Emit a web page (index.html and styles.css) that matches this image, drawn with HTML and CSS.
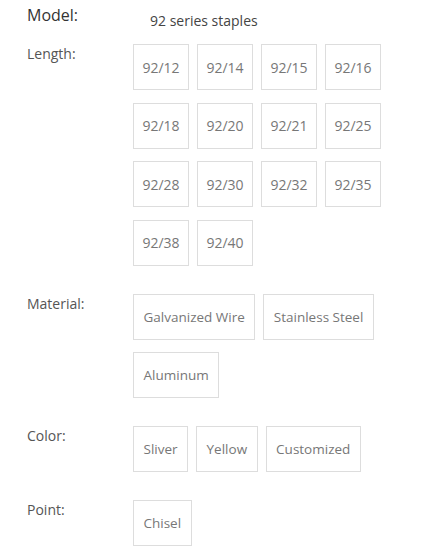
FILE: index.html
```html
<!DOCTYPE html>
<html>
<head>
<meta charset="utf-8">
<link rel="stylesheet" href="styles.css">
</head>
<body>
<div class="spec">
  <div class="row model-row">
    <div class="label model-label">Model:</div>
    <div class="model-value">92 series staples</div>
  </div>
  <div class="row">
    <div class="label">Length:</div>
    <div class="options">
      <span class="opt sq">92/12</span>
      <span class="opt sq">92/14</span>
      <span class="opt sq">92/15</span>
      <span class="opt sq">92/16</span>
      <span class="opt sq">92/18</span>
      <span class="opt sq">92/20</span>
      <span class="opt sq">92/21</span>
      <span class="opt sq">92/25</span>
      <span class="opt sq">92/28</span>
      <span class="opt sq">92/30</span>
      <span class="opt sq">92/32</span>
      <span class="opt sq">92/35</span>
      <span class="opt sq">92/38</span>
      <span class="opt sq">92/40</span>
    </div>
  </div>
  <div class="row">
    <div class="label">Material:</div>
    <div class="options">
      <span class="opt">Galvanized Wire</span>
      <span class="opt">Stainless Steel</span>
      <span class="opt">Aluminum</span>
    </div>
  </div>
  <div class="row">
    <div class="label">Color:</div>
    <div class="options">
      <span class="opt">Sliver</span>
      <span class="opt">Yellow</span>
      <span class="opt">Customized</span>
    </div>
  </div>
  <div class="row">
    <div class="label">Point:</div>
    <div class="options">
      <span class="opt">Chisel</span>
    </div>
  </div>
</div>
</body>
</html>
```

FILE: styles.css
```css
html, body {
  margin: 0;
  padding: 0;
  background: #fff;
}
body {
  font-family: "Open Sans", "Liberation Sans", sans-serif;
}
.spec {
  display: flex;
  flex-direction: column;
  padding: 0 0 0 27px;
}
.row {
  display: flex;
  align-items: flex-start;
  margin-bottom: 28px;
}
.model-row {
  padding-top: 4px;
  margin-bottom: 13px;
}
.label {
  width: 106px;
  flex-shrink: 0;
  font-size: 14px;
  line-height: 20px;
  color: #555;
}
.model-label {
  font-size: 16px;
  line-height: 22px;
  color: #333;
}
.model-value {
  margin-top: 7px;
  margin-left: 17px;
  font-size: 14px;
  line-height: 20px;
  color: #444;
}
.options {
  flex: 1;
  display: flex;
  flex-wrap: wrap;
  gap: 12.5px 8px;
  padding-right: 40px;
}
.opt {
  box-sizing: border-box;
  height: 46px;
  display: inline-flex;
  align-items: center;
  justify-content: center;
  padding: 0 9.5px;
  border: 1px solid #ddd;
  font-size: 13.5px;
  color: #777;
  white-space: nowrap;
}
.opt.sq {
  width: 56px;
  padding: 0;
  font-size: 14px;
}
```
